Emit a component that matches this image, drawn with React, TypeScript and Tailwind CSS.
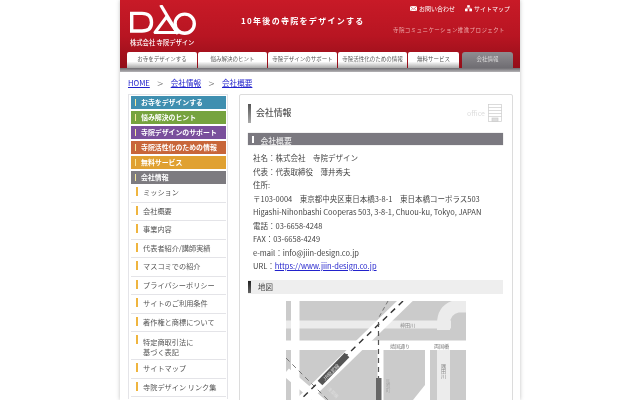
const tabs = ["お寺をデザインする", "悩み解決のヒント", "寺院デザインのサポート", "寺院活性化のための情報", "無料サービス"];
const tabWidths = ["w-[70px]", "w-[69px]", "w-[69px]", "w-[69px]", "w-[51px]"];

const headings = [
  { label: "お寺をデザインする", bg: "bg-[#3f8fb0]" },
  { label: "悩み解決のヒント", bg: "bg-[#76a33f]" },
  { label: "寺院デザインのサポート", bg: "bg-[#7a4f9c]" },
  { label: "寺院活性化のための情報", bg: "bg-[#c8663a]" },
  { label: "無料サービス", bg: "bg-[#e0a132]" },
  { label: "会社情報", bg: "bg-[#7d7b80]" },
];

const items = [
  ["ミッション"],
  ["会社概要"],
  ["事業内容"],
  ["代表者紹介/講師実績"],
  ["マスコミでの紹介"],
  ["プライバシーポリシー"],
  ["サイトのご利用条件"],
  ["著作権と商標について"],
  ["特定商取引法に", "基づく表記"],
  ["サイトマップ"],
  ["寺院デザイン リンク集"],
];

const lines = [
  "社名：株式会社　寺院デザイン",
  "代表：代表取締役　薄井秀夫",
  "住所:",
  "〒103-0004　東京都中央区東日本橋3-8-1　東日本橋コーポラス503",
  "Higashi-Nihonbashi Cooperas 503, 3-8-1, Chuou-ku, Tokyo, JAPAN",
  "電話：03-6658-4248",
  "FAX：03-6658-4249",
  "e-mail：info@jiin-design.co.jp",
];

function Logo() {
  return (
    <svg width="68" height="32" viewBox="0 0 68 32" fill="none" stroke="#fff" strokeWidth="3.4" className="block">
      <path d="M1.700 8.400H12Q21.500 8.400 21.500 17.500Q21.500 26 12 26H1.700Z" />
      <path d="M25 27.500H47L36.500 12Z" strokeWidth="3" strokeLinejoin="round" />
      <path d="M30.700 0L48 29" strokeWidth="3.200" />
      <circle cx="54.700" cy="18.700" r="9.600" />
    </svg>
  );
}

function MapDrawing() {
  const font = "'Noto Sans CJK JP', sans-serif";
  return (
    <svg width="180" height="99" viewBox="286 301 180 99" className="block">
      <rect x="286" y="301" width="180" height="99" fill="#cbcbcb" />
      <rect x="286" y="320.500" width="165" height="8" fill="#ececec" />
      <rect x="286" y="340.500" width="180" height="9.500" fill="#fff" />
      <rect x="291" y="301" width="8.500" height="99" fill="#fff" />
      <path d="M443.500 330V324Q443.500 309 458 306H466" fill="none" stroke="#ececec" strokeWidth="13" />
      <rect x="437" y="350" width="13" height="50" fill="#ececec" />
      <rect x="425" y="350" width="5" height="50" fill="#fff" />
      <path d="M425 385V400H413Z" fill="#fff" />
      <path d="M410 296L300 403" stroke="#fff" strokeWidth="11" fill="none" />
      <path d="M286 372L322 403" stroke="#fff" strokeWidth="9" fill="none" />
      <path d="M286 358L328 400" stroke="#777" strokeWidth="1" strokeDasharray="5 4" fill="none" />
      <path d="M380.500 350V400" stroke="#fff" strokeWidth="6" fill="none" />
      <path d="M403 301L300 400" stroke="#333" strokeWidth="1.400" strokeDasharray="6 5" fill="none" />
      <path d="M378.500 322V380" stroke="#555" strokeWidth="1.200" strokeDasharray="5 4" fill="none" />
      <path d="M388 301L378.500 318" stroke="#777" strokeWidth="1" strokeDasharray="4 3" fill="none" />
      <path d="M347 355L320 383" stroke="#555" strokeWidth="6.500" />
      <text fontSize="5" fill="#ddd" transform="translate(325 381) rotate(-45)" fontFamily={font}>JR総武線</text>
      <rect x="376" y="378" width="5.500" height="22" fill="#666" />
      <text x="400" y="327" fontSize="5" fill="#888" fontFamily={font}>神田川</text>
      <text x="390" y="348" fontSize="5" fill="#777" fontFamily={font}>靖国通り</text>
      <text x="434" y="348" fontSize="5" fill="#777" fontFamily={font}>両国橋</text>
      <text x="443.500" y="364" fontSize="5" fill="#888" className="[writing-mode:vertical-rl]" fontFamily={font}>隅田川</text>
      <text x="388" y="379" fontSize="4.500" fill="#aaa" className="[writing-mode:vertical-rl]" fontFamily={font}>馬喰町</text>
      <text fontSize="4.500" fill="#ddd" transform="translate(327 389) rotate(45)" fontFamily={font}>浅草橋</text>
    </svg>
  );
}

export default function App() {
  return (
    <div className="h-[400px] overflow-hidden bg-white font-['Noto_Sans_CJK_JP','Noto_Sans',sans-serif] text-[#444] blur-[0.35px]">
      <div className="mx-auto w-[400px] h-[400px] overflow-hidden bg-white shadow-[0_0_4px_rgba(0,0,0,0.25)]">
        <header className="h-[72px] bg-gradient-to-b from-[#c81a27] via-[#b81522] to-[#8f0d18] flex flex-col">
          <div className="h-[52px] flex px-[10px]">
            <div className="w-[100px] pt-[5px]">
              <Logo />
              <div className="text-[6.300px] leading-[9px] text-white font-medium mt-[0.500px] whitespace-nowrap">株式会社 寺院デザイン</div>
            </div>
            <div className="w-[130px] pt-[15px] pl-[11px] text-[8px] leading-[12px] font-bold text-white tracking-[1.300px] whitespace-nowrap">
              10年後の寺院をデザインする
            </div>
            <div className="flex-1 flex flex-col items-end pt-[4px]">
              <div className="flex items-center gap-[10px] text-[6px] leading-[9px] text-white">
                <span className="flex items-center gap-[2px]">
                  <svg width="7" height="5.500" viewBox="0 0 8 6"><rect width="8" height="6" fill="#fff" /><path d="M0 0L4 3.500L8 0M0 6L3 3M8 6L5 3" stroke="#c81a27" strokeWidth="0.600" fill="none" /></svg>
                  お問い合わせ
                </span>
                <span className="flex items-center gap-[2px]">
                  <svg width="7" height="6.500" viewBox="0 0 8 7" fill="#fff"><rect x="2.500" y="0" width="3" height="2.500" /><rect x="0" y="4" width="3" height="3" /><rect x="5" y="4" width="3" height="3" /><path d="M4 2.500V3.500M1.500 4V3.300H6.500V4" stroke="#fff" strokeWidth="0.600" fill="none" /></svg>
                  サイトマップ
                </span>
              </div>
              <div className="mt-[13px] mr-[5px] text-[5.500px] leading-[9px] text-[#eeaaaa] tracking-[0.400px] whitespace-nowrap">寺院コミュニケーション推進プロジェクト</div>
            </div>
          </div>
          <nav className="h-[16px] flex gap-[1px] pl-[7px] items-end">
            {tabs.map((t, i) => (
              <div key={t} className={`${tabWidths[i]} h-[16px] rounded-t-[2px] bg-gradient-to-b from-white from-[60%] to-[#aaaaaa] text-[5.500px] leading-[15px] text-center text-[#555] whitespace-nowrap`}>{t}</div>
            ))}
            <div className="w-[51px] ml-[2px] h-[16px] rounded-t-[3px] bg-gradient-to-b from-[#8f8d91] to-[#6f6d72] text-[5.500px] leading-[15px] text-center text-[#ddd]">会社情報</div>
          </nav>
          <div className="h-[4px] bg-gradient-to-b from-[#6f6d72] to-[#b5b4b6]" />
        </header>

        <div className="h-[20px] flex items-center pl-[8px] pt-[1px] text-[7.600px] text-[#2222cc] leading-[12px]">
          <a className="underline">HOME</a>
          <span className="mx-[7.500px] text-[#666] text-[11px] font-light">&gt;</span>
          <a className="underline">会社情報</a>
          <span className="mx-[7.500px] text-[#666] text-[11px] font-light">&gt;</span>
          <a className="underline">会社概要</a>
        </div>

        <div className="flex items-start pt-[2px]">
          <aside className="ml-[8px] w-[100px] shrink-0 border border-[#e4e4e8] border-b-0 p-[1.500px] pt-[1px]">
            <div className="flex flex-col gap-[2px]">
              {headings.map((h) => (
                <div key={h.label} className={`${h.bg} h-[13px] flex items-center gap-[5px] pl-[4px] text-[6.900px] leading-[13px] font-bold text-white whitespace-nowrap`}>
                  <span className="w-[1.500px] h-[7px] bg-[#f5e89a] shrink-0" />
                  {h.label}
                </div>
              ))}
            </div>
            <ul>
              {items.map((it) => (
                <li key={it[0]} className={`relative border-b border-[#e4e4e8] pl-[12.500px] text-[7.200px] text-[#555] whitespace-nowrap ${it.length > 1 ? "pt-[4.500px] pb-[2.500px] leading-[10px]" : "py-[2px] leading-[13.500px]"}`}>
                  <span className="absolute left-[5px] top-[3px] w-[2px] h-[9px] bg-[#efb53f]" />
                  {it.map((l) => <div key={l}>{l}</div>)}
                </li>
              ))}
            </ul>
          </aside>

          <main className="ml-[11px] w-[274px] h-[320px] shrink-0 rounded-[2px] border border-[#dcdcdc] px-[8px] pt-[8px]">
            <div className="flex items-center h-[20px]">
              <span className="w-[3px] h-[19px] bg-gradient-to-b from-[#555] to-[#aaa]" />
              <h1 className="ml-[5px] text-[8.900px] leading-[14px] font-medium text-[#555]">会社情報</h1>
              <span className="ml-auto mr-[3px] text-[7px] text-[#ddd]">office</span>
              <svg width="14" height="18" viewBox="0 0 14 18" className="mr-[2px]" fill="none" stroke="#ccc" strokeWidth="0.700">
                <rect x="0.500" y="0.500" width="13" height="17" />
                <path d="M0.500 3.500H13.500M0.500 6.500H13.500M0.500 9.500H13.500M0.500 12.500H13.500" />
                <rect x="4" y="14" width="6" height="3.500" fill="#ddd" />
              </svg>
            </div>
            <div className="mt-[10px] h-[12px] w-[255px] bg-[#7b7980] flex items-center pl-[4px] gap-[7px] text-[7.800px] font-medium leading-[12px] text-[#eee] shadow-[0_0_1px_rgba(0,0,0,0.3)]">
              <span className="w-[1.500px] h-[7px] bg-white" />
              <span className="mt-[3px]">会社概要</span>
            </div>
            <div className="mt-[6px] pl-[5px] text-[7.500px] leading-[13.500px] text-[#444] whitespace-nowrap">
              {lines.map((l) => <div key={l}>{l}</div>)}
              <div>URL：<a className="underline text-[#2222cc]">https://www.jiin-design.co.jp</a></div>
            </div>
            <div className="mt-[7px] h-[14px] w-[255px] bg-[#eeeeee] flex items-center gap-[7px] text-[7.500px] leading-[14px] text-[#444]">
              <span className="w-[3px] h-[12px] bg-gradient-to-b from-[#222] to-[#666]" />
              地図
            </div>
            <div className="mt-[7px] ml-[38px]">
              <MapDrawing />
            </div>
          </main>
        </div>
      </div>
    </div>
  );
}
